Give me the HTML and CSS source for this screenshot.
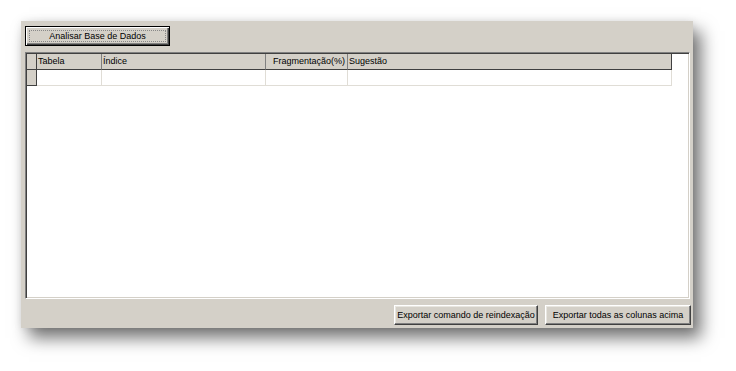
FILE: index.html
```html
<!DOCTYPE html>
<html lang="pt">
<head>
<meta charset="UTF-8">
<title>Analisar Base de Dados</title>
<link rel="stylesheet" href="styles.css">
</head>
<body>
<div class="window">
  <div class="toolbar">
    <button class="btn default"><span class="focus">Analisar Base de Dados</span></button>
  </div>
  <div class="grid">
    <div class="row head">
      <div class="cell ind"></div>
      <div class="cell c1">Tabela</div>
      <div class="cell c2">Índice</div>
      <div class="cell c3 num">Fragmentação(%)</div>
      <div class="cell c4">Sugestão</div>
    </div>
    <div class="row data">
      <div class="cell ind"></div>
      <div class="cell c1"></div>
      <div class="cell c2"></div>
      <div class="cell c3"></div>
      <div class="cell c4"></div>
    </div>
  </div>
  <div class="actions">
    <button class="btn wide1">Exportar comando de reindexação</button>
    <button class="btn wide2">Exportar todas as colunas acima</button>
  </div>
</div>
</body>
</html>
```
FILE: styles.css
```css
*{margin:0;padding:0;box-sizing:border-box;}
html,body{background:#fff;height:100%;}
body{padding:21px 0 0 21px;font-family:'Liberation Sans',Arial,sans-serif;font-size:9px;color:#000;}

/* window panel */
.window{width:672px;height:307px;background:#d4d0c8;display:flex;flex-direction:column;padding:5px 3px 3px 4px;
 box-shadow:8px 10px 16px rgba(0,0,0,0.55),0 0 8px rgba(0,0,0,0.08);}

/* buttons */
.btn{font:inherit;color:#000;background:#d4d0c8;height:20px;display:flex;align-items:center;justify-content:center;
 border:1px solid;border-color:#fff #404040 #404040 #fff;box-shadow:inset -1px -1px 0 #808080,inset 1px 1px 0 #e8e6e0;}
.btn.default{width:145px;border:1px solid #000;box-shadow:inset 1px 1px 0 #fff,inset -1px -1px 0 #404040,inset -2px -2px 0 #808080;padding:3px;}
.btn .focus{flex:1;align-self:stretch;display:flex;align-items:center;justify-content:center;border:1px dotted #888;}
.wide1{width:144px;}
.wide2{width:146px;}

.toolbar{display:flex;height:20px;}
.actions{display:flex;justify-content:flex-end;gap:7px;margin-top:6px;margin-right:-1px;}

/* grid */
.grid{flex:1;margin-top:6px;background:#fff;border:1px solid;border-color:#808080 #fff #fff #808080;
 box-shadow:inset 1px 1px 0 #404040,inset -1px -1px 0 #d4d0c8;padding:1px 0 0 1px;}
.row{display:flex;height:16px;}
.cell{height:16px;line-height:15px;padding:0 2px;white-space:nowrap;overflow:hidden;}
.ind{width:10px;}
.c1{width:65px;}
.c2{width:164px;}
.c3{width:82px;}
.c4{width:324px;}
.num{text-align:right;}

.head .cell{background:#d4d0c8;border-right:1px solid #808080;border-bottom:1px solid #404040;padding-left:1px;}
.head .c4{border-right-color:#404040;}
.head .ind{border-right-color:#404040;}

.data .cell{border-right:1px solid #e0ddd6;border-bottom:1px solid #e0ddd6;}
.data .ind{background:#d4d0c8;border-right:1px solid #404040;border-bottom:1px solid #404040;}
```
